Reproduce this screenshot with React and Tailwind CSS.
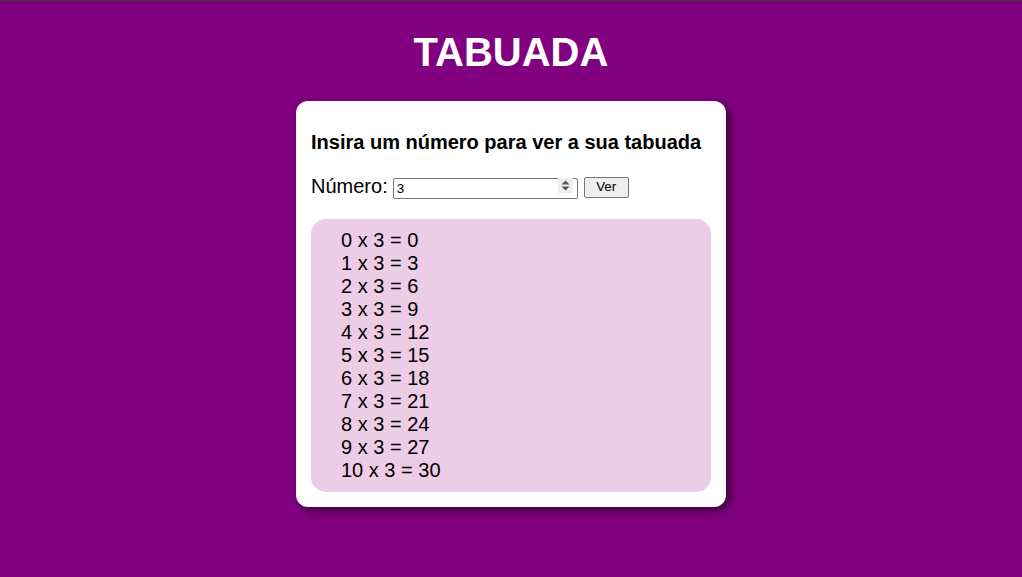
import React from "react";

export default function App() {
  const n = 3;
  const rows = Array.from({ length: 11 }, (_, i) => `${i} x ${n} = ${i * n}`);
  return (
    <div className="min-h-[577px] bg-[#800080] border-t border-[#3c3c3c] flex flex-col items-center font-['Liberation_Sans',Arial,sans-serif]">
      <h1 className="text-[40px] leading-[46px] font-bold text-white mt-[28px]">TABUADA</h1>
      <div className="mt-[26px] w-[430px] bg-white rounded-[12px] p-[15px] shadow-[4px_4px_10px_rgba(0,0,0,0.55)]">
        <h2 className="mt-[15px] text-[20px] leading-[23px] font-bold text-black">
          Insira um número para ver a sua tabuada
        </h2>
        <div className="mt-[19px] flex items-center text-[20px] leading-[23px] text-black">
          <span>Número:</span>
          <div className="relative ml-[5px] mt-[2px]">
            <input
              type="text"
              defaultValue="3"
              className="w-[185px] h-[21px] border border-[#767676] rounded-[2px] pl-[3px] text-[13.33px] text-black bg-white outline-none font-['Liberation_Sans',Arial,sans-serif]"
            />
            <div className="absolute right-[5px] top-[3px] w-[15px] h-[15px] bg-[#eeeeee] flex items-center justify-center">
              <svg width="9" height="11" viewBox="0 0 9 11">
                <path d="M4.5 0.5 L8.5 4.5 L0.5 4.5 Z" fill="#555" />
                <path d="M4.5 10.5 L8.5 6.5 L0.5 6.5 Z" fill="#555" />
              </svg>
            </div>
          </div>
          <button className="ml-[6px] mt-[2px] w-[45px] h-[21px] bg-[#efefef] border border-[#767676] rounded-[2px] text-[13.33px] leading-none text-black font-['Liberation_Sans',Arial,sans-serif]">
            Ver
          </button>
        </div>
        <div className="mt-[20px] bg-[#ecccE6] rounded-[15px] py-[10px] pl-[30px]">
          <ul className="text-[20px] leading-[23px] text-black">
            {rows.map((r) => (
              <li key={r}>{r}</li>
            ))}
          </ul>
        </div>
      </div>
    </div>
  );
}
